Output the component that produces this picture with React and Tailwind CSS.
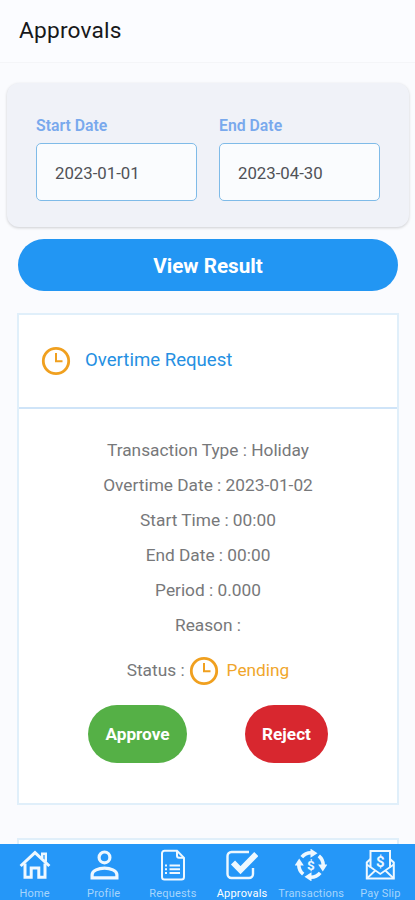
const details = [
  'Transaction Type : Holiday',
  'Overtime Date : 2023-01-02',
  'Start Time : 00:00',
  'End Date : 00:00',
  'Period : 0.000',
  'Reason :',
]

const tabs = [
  { label: 'Home', icon: HomeIcon },
  { label: 'Profile', icon: ProfileIcon },
  { label: 'Requests', icon: RequestsIcon },
  { label: 'Approvals', icon: ApprovalsIcon, active: true },
  { label: 'Transactions', icon: TransactionsIcon },
  { label: 'Pay Slip', icon: PaySlipIcon },
]

function ClockIcon() {
  return (
    <svg className="h-[30px] w-[30px] shrink-0" viewBox="0 0 30 30" fill="none" stroke="#f0a01f">
      <circle cx="15" cy="15" r="12.7" strokeWidth="2.8" />
      <path d="M15 7v8.3h6.5" strokeWidth="2" />
    </svg>
  )
}

function HomeIcon() {
  return (
    <svg className="h-8 w-8" viewBox="0 0 32 32" fill="none" stroke="currentColor" strokeWidth="3">
      <path d="M1.6 17 16 3.6 30.4 17" />
      <path d="M23.2 9V4.8h3.6v8" strokeWidth="2.4" />
      <path d="M6 14.5v13.8h6.2V19h7.6v9.3H26V14.5" />
    </svg>
  )
}

function ProfileIcon() {
  return (
    <svg className="h-8 w-8" viewBox="0 0 32 32" fill="none" stroke="currentColor" strokeWidth="3.2">
      <circle cx="16.5" cy="8.4" r="5.4" />
      <path d="M4.1 28.8v-3c0-4.2 6.6-6.6 12.4-6.6s12.4 2.4 12.4 6.6v3z" />
    </svg>
  )
}

function RequestsIcon() {
  return (
    <svg className="h-8 w-8" viewBox="0 0 32 32" fill="none" stroke="currentColor" strokeWidth="2">
      <path d="M7.5 1.8H20l7 7V28a2.500 2.500 0 0 1-2.500 2.500h-17A2.500 2.500 0 0 1 5 28V4.300a2.500 2.500 0 0 1 2.500-2.500z" />
      <path d="M20 1.8v5a2 2 0 0 0 2 2h5" />
      <path d="M8 16.5h2m2.500 0H23M8 20.300h2m2.500 0H23M8 24.100h2m2.500 0H23" />
    </svg>
  )
}

function ApprovalsIcon() {
  return (
    <svg className="h-8 w-8" viewBox="0 0 32 32" fill="none" stroke="currentColor">
      <path d="M23 3H5.500a4 4 0 0 0-4 4v18a4 4 0 0 0 4 4H23a4 4 0 0 0 4-4v-6" strokeWidth="2.4" />
      <path d="m7 13.500 7.500 7.700L30.300 5" strokeWidth="5.8" />
    </svg>
  )
}

function TransactionsIcon() {
  return (
    <svg className="h-8 w-8" viewBox="0 0 32 32" fill="none" stroke="currentColor" strokeWidth="3.6">
      {[0, 90, 180, 270].map((angle) => (
        <g key={angle} transform={`rotate(${angle} 16 16)`}>
          <path d="M6.800 8.200A12.200 12.200 0 0 1 16 3.800" />
          <path d="M15.500-.4 22.500 4.200l-7 4.600z" fill="currentColor" stroke="none" />
        </g>
      ))}
      <text x="16" y="20.800" textAnchor="middle" fontSize="13.5" fontWeight="700" fill="currentColor" stroke="none">$</text>
    </svg>
  )
}

function PaySlipIcon() {
  return (
    <svg className="h-8 w-8" viewBox="0 0 32 32" fill="none" stroke="currentColor" strokeWidth="2">
      <path d="M6.500 18.500V2H26v16.500" />
      <path d="M6.500 10 2.800 13.500v16h27v-16L26 10" />
      <path d="m2.800 15.500 13.500 9.500 13.500-9.500M2.800 29.500l8.500-8m18.500 8-8.500-8" strokeWidth="1.8" />
      <text x="16.3" y="18" textAnchor="middle" fontSize="15" fontWeight="700" fill="currentColor" stroke="none">$</text>
    </svg>
  )
}

function DateField({ label, value }) {
  return (
    <label className="flex w-[161px] flex-col">
      <span className="h-[17px] text-[15.8px] leading-[17px] font-semibold text-[#79a9ed]">{label}</span>
      <input
        readOnly
        value={value}
        className="mt-[9px] h-[58px] w-full rounded-[5px] border-[1.5px] border-[#7fbbe8] bg-[#fafcfe] px-[18px] pt-px text-[16.8px] text-[#505257] outline-none"
      />
    </label>
  )
}

export default function App() {
  return (
    <div className="flex h-[900px] w-full flex-col overflow-hidden bg-[#fafbfe] font-[Roboto,sans-serif]">
      <header className="flex h-[63px] shrink-0 items-center border-b border-[#f4f5f8] bg-[#fbfcff] pl-[19px]">
        <h1 className="text-[22.7px] leading-[26px] tracking-[0.2px] text-[#17181a]">Approvals</h1>
      </header>

      <main className="min-h-0 flex-1 overflow-hidden">
        <section className="mr-[6px] ml-[7px] mt-5 flex h-[144px] gap-[22px] rounded-xl bg-[#f0f2f8] pt-[34px] pl-[29px] shadow-[0_1px_3px_rgba(0,0,0,0.18)]">
          <DateField label="Start Date" value="2023-01-01" />
          <DateField label="End Date" value="2023-04-30" />
        </section>

        <button className="mx-[18px] mt-[12px] block h-[52px] w-[380px] rounded-full bg-[#2296f3] pt-[3px] text-[20.7px] font-bold text-white">
          View Result
        </button>

        <article className="mx-[17px] mt-[22px] h-[492px] w-[382px] border-2 border-[#e0effa] bg-white">
          <div className="flex h-[94px] items-center gap-[14px] border-b-2 border-[#cfe4f8] pl-[22px]">
            <ClockIcon />
            <h2 className="text-[18.6px] text-[#2590e2]">Overtime Request</h2>
          </div>
          <div className="flex flex-col items-center pt-[24px] text-[17.3px] text-[#77787a]">
            {details.map((line) => (
              <p key={line} className="h-[35px] leading-[35px]">{line}</p>
            ))}
            <div className="mt-[10px] flex h-[35px] items-center">
              <span className="mr-1">Status :</span>
              <ClockIcon />
              <span className="ml-2 text-[#f0a62c]">Pending</span>
            </div>
            <div className="mt-[17px] flex gap-[58px] text-[17.2px] font-bold text-white">
              <button className="h-[58px] w-[99px] rounded-full bg-[#55b046] pt-[2px]">Approve</button>
              <button className="h-[58px] w-[83px] rounded-full bg-[#d8272f] pt-[2px]">Reject</button>
            </div>
          </div>
        </article>

        <article className="mx-[17px] mt-[33px] h-[93px] w-[382px] border-2 border-[#e0effa] bg-white" />
      </main>

      <nav className="grid h-14 shrink-0 grid-cols-6 overflow-hidden bg-[#2597f8]">
        {tabs.map(({ label, icon: Icon, active }) => (
          <button
            key={label}
            className={`flex flex-col items-center pt-[5px] text-[11px] leading-[13px] tracking-[0.2px] whitespace-nowrap ${active ? 'text-white' : 'text-[#a6d5fc]'}`}
          >
            <span className="text-[#eef8ff]"><Icon /></span>
            <span className="mt-[6px]">{label}</span>
          </button>
        ))}
      </nav>
    </div>
  )
}
